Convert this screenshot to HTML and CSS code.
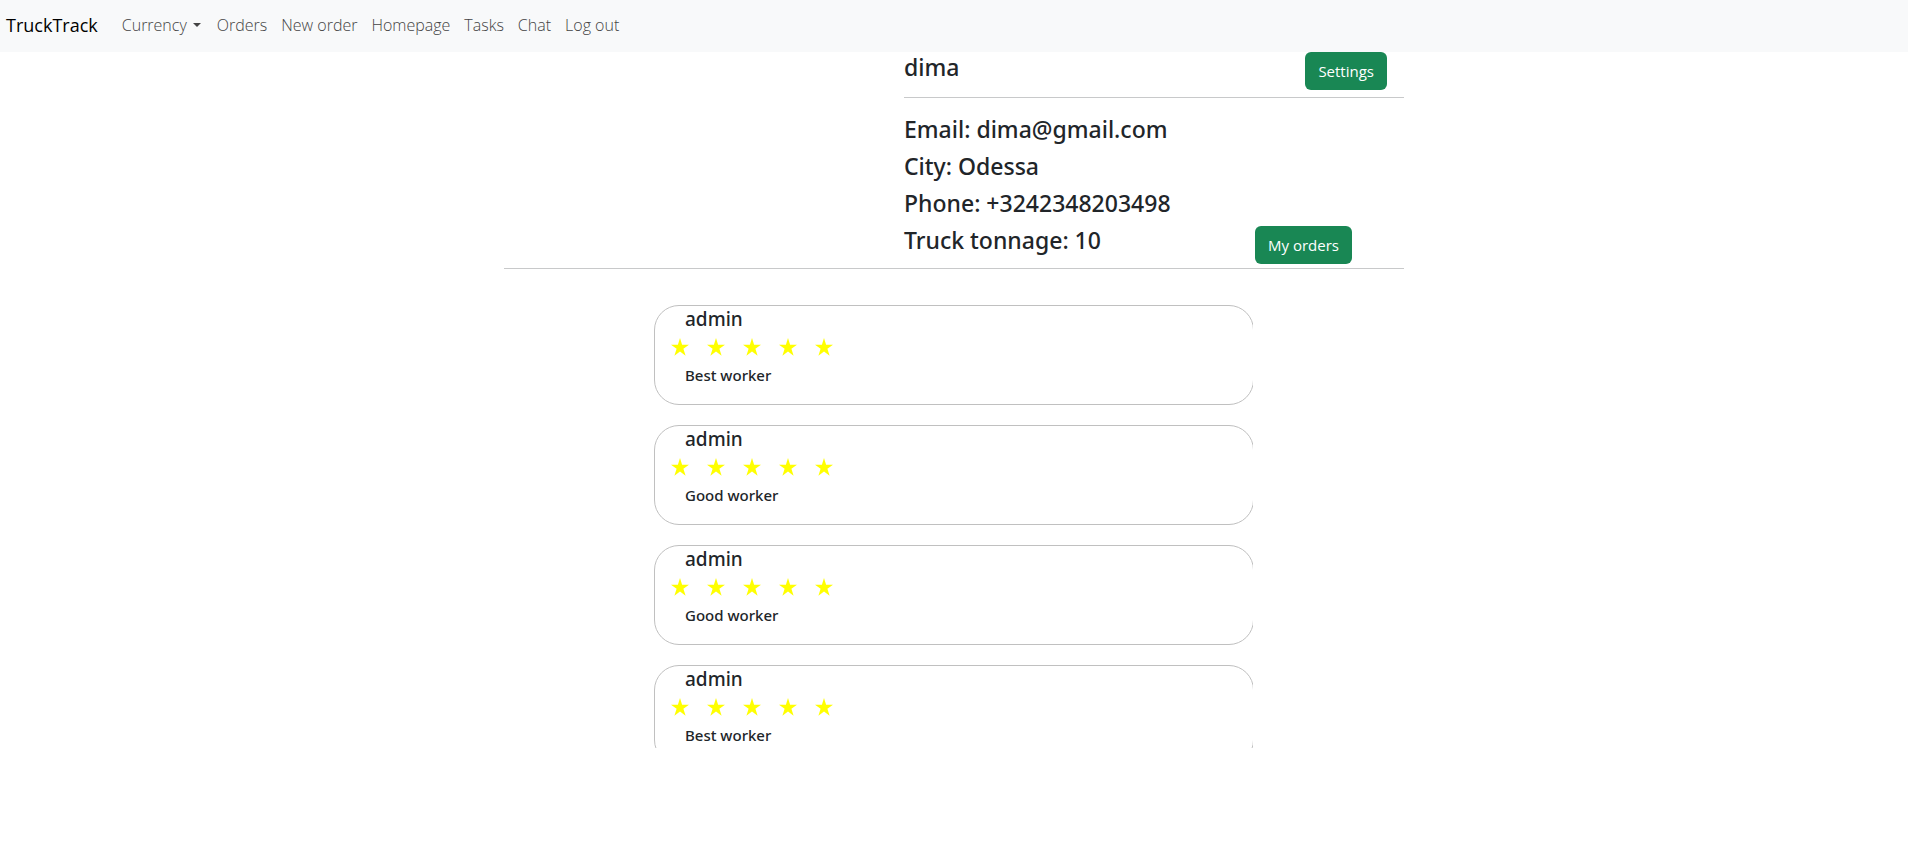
FILE: index.html
```html
<!DOCTYPE html>
<html lang="en">
<head>
<meta charset="utf-8">
<meta name="viewport" content="width=device-width, initial-scale=1">
<title>TruckTrack</title>
<link rel="stylesheet" href="styles.css">
</head>
<body>
<svg class="sprite" aria-hidden="true">
  <symbol id="star" viewBox="0 0 18 18"><path d="M9 0l2.1 6.7H18l-5.6 4.1 2.2 6.9L9 13.5l-5.6 4.2 2.2-6.9L0 6.7h6.9z"/></symbol>
</svg>
<nav class="navbar">
  <a class="brand" href="#">TruckTrack</a>
  <div class="nav-links">
    <button class="nav-link dropdown" type="button">Currency</button>
    <a class="nav-link" href="#">Orders</a>
    <a class="nav-link" href="#">New order</a>
    <a class="nav-link" href="#">Homepage</a>
    <a class="nav-link" href="#">Tasks</a>
    <a class="nav-link" href="#">Chat</a>
    <a class="nav-link" href="#">Log out</a>
  </div>
</nav>
<main class="page">
  <section class="profile">
    <div class="profile-info">
      <header class="profile-head">
        <h4 class="line">dima</h4>
        <button class="btn" type="button">Settings</button>
      </header>
      <div class="details">
        <div class="facts">
          <h4 class="line">Email: dima@gmail.com</h4>
          <h4 class="line">City: Odessa</h4>
          <h4 class="line">Phone: +3242348203498</h4>
          <h4 class="line">Truck tonnage: 10</h4>
        </div>
        <button class="btn" type="button">My orders</button>
      </div>
    </div>
  </section>
  <section class="reviews">
    <article class="review">
      <h5 class="author">admin</h5>
      <div class="stars" role="img" aria-label="5 of 5"><svg><use href="#star"/></svg><svg><use href="#star"/></svg><svg><use href="#star"/></svg><svg><use href="#star"/></svg><svg><use href="#star"/></svg></div>
      <h6 class="comment">Best worker</h6>
    </article>
    <article class="review">
      <h5 class="author">admin</h5>
      <div class="stars" role="img" aria-label="5 of 5"><svg><use href="#star"/></svg><svg><use href="#star"/></svg><svg><use href="#star"/></svg><svg><use href="#star"/></svg><svg><use href="#star"/></svg></div>
      <h6 class="comment">Good worker</h6>
    </article>
    <article class="review">
      <h5 class="author">admin</h5>
      <div class="stars" role="img" aria-label="5 of 5"><svg><use href="#star"/></svg><svg><use href="#star"/></svg><svg><use href="#star"/></svg><svg><use href="#star"/></svg><svg><use href="#star"/></svg></div>
      <h6 class="comment">Good worker</h6>
    </article>
    <article class="review">
      <h5 class="author">admin</h5>
      <div class="stars" role="img" aria-label="5 of 5"><svg><use href="#star"/></svg><svg><use href="#star"/></svg><svg><use href="#star"/></svg><svg><use href="#star"/></svg><svg><use href="#star"/></svg></div>
      <h6 class="comment">Best worker</h6>
    </article>
  </section>
</main>
</body>
</html>
```

FILE: styles.css
```css
* { box-sizing: border-box; }
body {
  margin: 0;
  background: #fff;
  color: #212529;
  font-family: "Open Sans", "Noto Sans", sans-serif;
  font-size: 15px;
  line-height: 24px;
}
h4, h5, h6 { margin: 0; font-family: "Noto Sans", "Open Sans", sans-serif; font-weight: 500; }
.sprite { display: none; }

.navbar {
  display: flex;
  align-items: center;
  height: 52px;
  padding: 0 6px 3px;
  background: #f8f9fa;
}
.brand {
  margin-right: 17px;
  color: #000;
  font-size: 18px;
  text-decoration: none;
}
.nav-links { display: flex; }
.nav-link {
  padding: 8px 7px;
  border: 0;
  background: none;
  color: #444;
  font: inherit;
  font-size: 16px;
  font-weight: 300;
  text-decoration: none;
}
.dropdown { padding-right: 9px; }
.dropdown::after {
  content: "";
  display: inline-block;
  margin-left: 6px;
  vertical-align: 4px;
  border-top: 4px solid #444;
  border-left: 4px solid transparent;
  border-right: 4px solid transparent;
}

.page { max-width: 900px; margin: 0 auto; }
.profile {
  display: flex;
  justify-content: flex-end;
  border-bottom: 1px solid #c8c9ca;
}
.profile-info { width: 500px; }
.profile-head {
  display: flex;
  justify-content: space-between;
  align-items: flex-start;
  padding: 0 17px 7px 0;
  border-bottom: 1px solid #c8c9ca;
}
.profile-head .line { padding-top: 1px; }
.details {
  display: flex;
  justify-content: space-between;
  align-items: flex-end;
  padding: 17px 52px 4px 0;
}
.facts { padding-bottom: 1px; }
.line {
  padding-bottom: 8px;
  font-size: 23px;
  line-height: 29px;
}
.btn {
  padding: 7px 13px;
  border: 0;
  border-radius: 6px;
  background: #198754;
  color: #fff;
  font: inherit;
}

.reviews {
  max-width: 600px;
  height: 479px;
  margin: 0 auto;
  padding-top: 36px;
  border-right: 1px solid transparent;
  overflow: hidden;
}
.review {
  width: calc(100% + 1px);
  height: 100px;
  margin-bottom: 20px;
  border: 1px solid #c0c0c0;
  border-radius: 25px;
}
.author {
  padding: 1px 0 0 30px;
  font-size: 19px;
}
.stars {
  display: flex;
  gap: 18px;
  padding: 7px 0 7px 16px;
}
.stars svg { width: 18px; height: 18px; fill: #ff0; }
.comment { padding-left: 30px; font-size: 15px; }
```
